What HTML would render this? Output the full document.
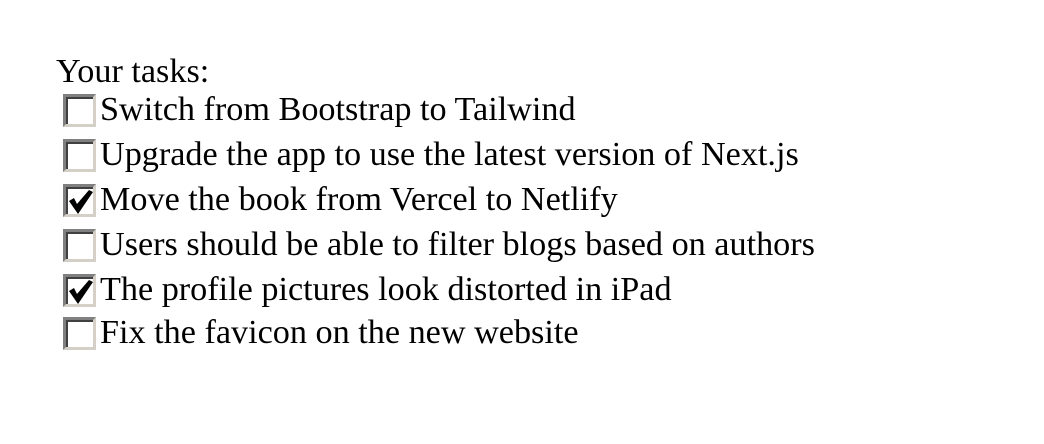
<!DOCTYPE html>
<html><head><style>
body{margin:0;width:1044px;height:444px;background:#fff;font-family:"Liberation Serif",serif;font-size:34.2px;color:#000;position:relative;overflow:hidden}
.t{position:absolute;left:56px;white-space:nowrap;line-height:36px}
.r{position:absolute;left:63px;height:36px;white-space:nowrap;line-height:36px}
.cb{position:absolute;left:0;top:2px;width:33px;height:33px;box-sizing:border-box;border-top:3px solid #808080;border-left:3px solid #808080;border-bottom:3px solid #d4d0c8;border-right:3px solid #d4d0c8;background:#fff}
.cb i{position:absolute;inset:0;border-top:2px solid #404040;border-left:2px solid #404040}
.cb svg{position:absolute;left:2px;top:2px}
.r span{position:absolute;left:37px;top:0}
</style></head><body>
<div class="t" style="top:54px">Your tasks:</div>
<div class="r" style="top:92px"><div class="cb"><i></i></div><span>Switch from Bootstrap to Tailwind</span></div>
<div class="r" style="top:137px"><div class="cb"><i></i></div><span>Upgrade the app to use the latest version of Next.js</span></div>
<div class="r" style="top:182px"><div class="cb"><i></i><svg width="25" height="25" viewBox="0 0 25 25"><path d="M1 12 L6 9 L9 15 L21 1 L25 3 L10 25 Z" fill="#000"/></svg></div><span>Move the book from Vercel to Netlify</span></div>
<div class="r" style="top:227px"><div class="cb"><i></i></div><span>Users should be able to filter blogs based on authors</span></div>
<div class="r" style="top:272px"><div class="cb"><i></i><svg width="25" height="25" viewBox="0 0 25 25"><path d="M1 12 L6 9 L9 15 L21 1 L25 3 L10 25 Z" fill="#000"/></svg></div><span>The profile pictures look distorted in iPad</span></div>
<div class="r" style="top:315px"><div class="cb"><i></i></div><span>Fix the favicon on the new website</span></div>
</body></html>
